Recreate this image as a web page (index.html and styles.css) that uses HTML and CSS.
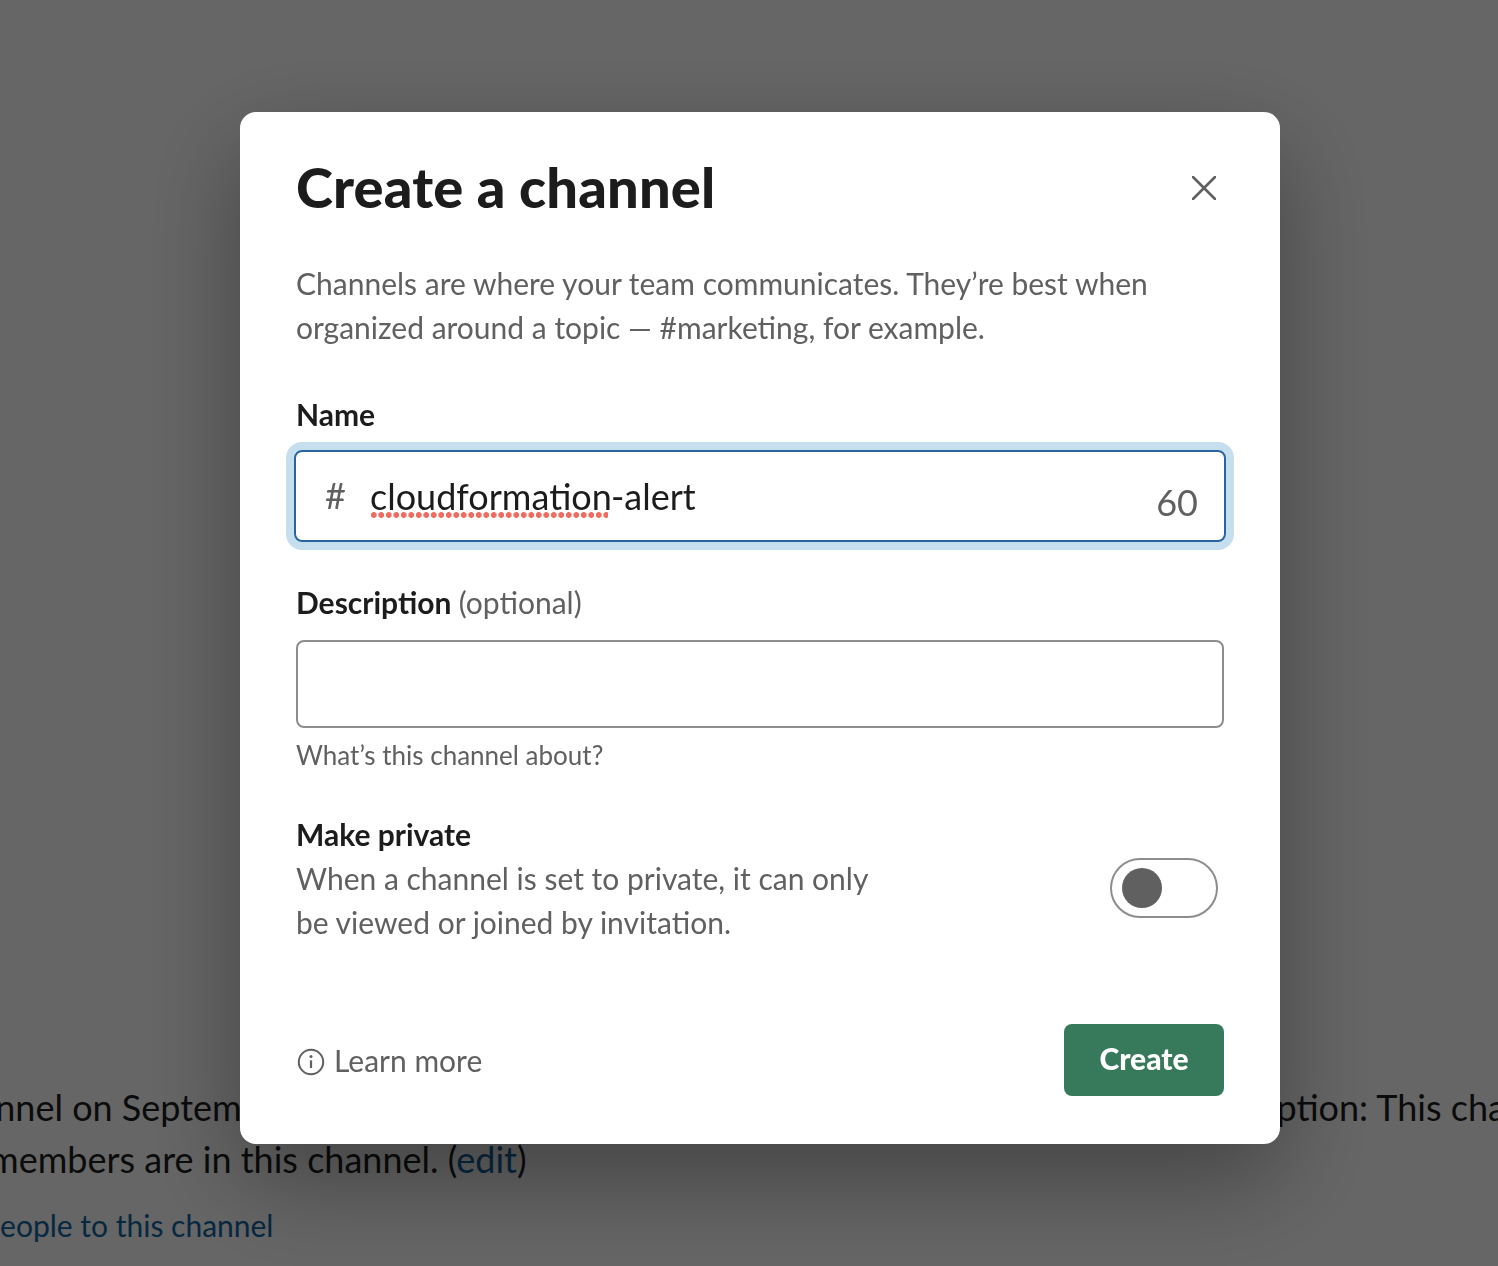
FILE: index.html
```html
<!DOCTYPE html>
<html lang="en">
<head>
    <meta charset="UTF-8">
    <meta name="viewport" content="width=device-width, initial-scale=1.0">
    <title>Create a channel</title>
    <link rel="stylesheet" href="styles.css">
</head>
<body>
    <div class="page">
        <div class="page-line">
            <span class="page-left">You created this channel on September 15th.</span>
            <span class="page-right">Add a description: This channel is for everything</span>
        </div>
        <div class="page-line page-line-second">
            <span class="page-left">4 members are in this channel. (<a class="page-link">edit</a>)</span>
        </div>
        <div class="page-add"><a class="page-link">Add people to this channel</a></div>
    </div>

    <div class="overlay">
        <div class="modal">
            <div class="modal-head">
                <h1>Create a channel</h1>
                <svg class="close-icon" viewBox="0 0 24 24" width="24" height="24">
                    <path d="M1 1 L23 23 M23 1 L1 23" fill="none" stroke="#616061" stroke-width="2.6" stroke-linecap="round"/>
                </svg>
            </div>
            <p class="intro">Channels are where your team communicates. They’re best when organized around a topic — #marketing, for example.</p>

            <div class="label label-name">Name</div>
            <div class="name-input">
                <span class="hash">#</span>
                <span class="name-value"><span class="misspelled">cloudformation</span>-alert</span>
                <span class="counter">60</span>
            </div>

            <div class="label label-desc">Description <span class="optional">(optional)</span></div>
            <div class="desc-input"></div>
            <div class="helper">What’s this channel about?</div>

            <div class="private-row">
                <div class="private-text">
                    <div class="label">Make private</div>
                    <p>When a channel is set to private, it can only be viewed or joined by invitation.</p>
                </div>
                <div class="toggle"><div class="knob"></div></div>
            </div>

            <div class="modal-foot">
                <a class="learn">
                    <svg class="info-icon" viewBox="0 0 28 28" width="28" height="28">
                        <circle cx="14" cy="14" r="12.2" fill="none" stroke="#616061" stroke-width="2"/>
                        <circle cx="14" cy="8.6" r="1.5" fill="#616061"/>
                        <path d="M14 12.4 V20" fill="none" stroke="#616061" stroke-width="2.2"/>
                    </svg>
                    Learn more
                </a>
                <button class="create">Create</button>
            </div>
        </div>
    </div>
</body>
</html>
```

FILE: styles.css
```css
body {
    margin: 0;
    height: 1266px;
    overflow: hidden;
    font-family: 'Lato', 'Liberation Sans', sans-serif;
    background-color: #fff;
    color: #1d1c1d;
}

.page {
    padding-top: 1081px;
    font-size: 36px;
    line-height: 52px;
    overflow: hidden;
}

.page-line {
    display: flex;
    justify-content: space-between;
    white-space: nowrap;
}

.page-left {
    margin-left: -322px;
}

.page-right {
    margin-right: -340px;
}

.page-line-second .page-left {
    margin-left: -41px;
}

.page-add {
    margin-top: 20px;
    margin-left: -78px;
    font-size: 30px;
    line-height: 40px;
    white-space: nowrap;
}

.page-link {
    color: #1264a3;
}

.overlay {
    position: fixed;
    top: 0;
    left: 0;
    right: 0;
    bottom: 0;
    background-color: rgba(0, 0, 0, 0.6);
    display: flex;
    justify-content: center;
    align-items: flex-start;
    padding: 112px 0 0 22px;
}

.modal {
    width: 1040px;
    height: 1032px;
    box-sizing: border-box;
    padding: 40px 56px 48px;
    background-color: #fff;
    border-radius: 16px;
    box-shadow: 0 36px 100px rgba(0, 0, 0, 0.35);
}

.modal-head {
    display: flex;
    justify-content: space-between;
    align-items: center;
}

h1 {
    margin: 0;
    font-size: 56px;
    line-height: 70px;
    font-weight: 900;
    letter-spacing: 0.15px;
}

.close-icon {
    margin: 2px 8px 0 0;
}

.intro,
.private-text p {
    margin: 0;
    font-size: 30px;
    line-height: 44px;
    color: #616061;
}

.intro {
    margin-top: 39px;
}

.label {
    font-size: 30px;
    line-height: 44px;
    font-weight: 700;
}

.label-name {
    margin-top: 43px;
}

.label-desc {
    margin-top: 38px;
}

.optional {
    font-weight: 400;
    color: #616061;
}

.name-input {
    display: flex;
    align-items: center;
    height: 92px;
    box-sizing: border-box;
    margin: 14px -2px 0;
    padding: 0 26px 0 29px;
    border: 2px solid #2a64a0;
    border-radius: 8px;
    box-shadow: 0 0 0 8px #c5dfee;
}

.hash {
    width: 45px;
    font-size: 36px;
    color: #616061;
    margin-top: -2px;
}

.name-value {
    flex: 1;
    font-size: 36px;
}

.misspelled {
    display: inline-block;
    width: 238px;
    margin-right: 3px;
    background-image: radial-gradient(circle, #ee6b60 2.6px, transparent 3.2px);
    background-size: 7.5px 6px;
    background-repeat: repeat-x;
    background-position: left 0 bottom 0;
}

.counter {
    font-size: 36px;
    color: #616061;
    margin-top: 12px;
}

.desc-input {
    height: 88px;
    box-sizing: border-box;
    margin-top: 16px;
    border: 2px solid #8d8d8d;
    border-radius: 8px;
}

.helper {
    margin-top: 9px;
    font-size: 26px;
    line-height: 36px;
    color: #616061;
}

.private-row {
    display: flex;
    justify-content: space-between;
    align-items: center;
    margin-top: 39px;
}

.private-text {
    width: 600px;
}

.toggle {
    width: 108px;
    height: 60px;
    box-sizing: border-box;
    margin-right: 6px;
    margin-top: 20px;
    padding: 8px 10px;
    border: 2px solid #8d8d8d;
    border-radius: 30px;
}

.knob {
    width: 40px;
    height: 40px;
    border-radius: 50%;
    background-color: #616061;
}

.modal-foot {
    display: flex;
    justify-content: space-between;
    align-items: center;
    margin-top: 80px;
}

.learn {
    display: flex;
    align-items: center;
    gap: 9px;
    margin-left: 1px;
    font-size: 30px;
    color: #616061;
}

.info-icon {
    margin-top: 3px;
}

.create {
    width: 160px;
    height: 72px;
    padding-bottom: 6px;
    border: none;
    border-radius: 8px;
    background-color: #37795b;
    color: #fff;
    font-family: inherit;
    font-size: 30px;
    font-weight: 900;
}
```
